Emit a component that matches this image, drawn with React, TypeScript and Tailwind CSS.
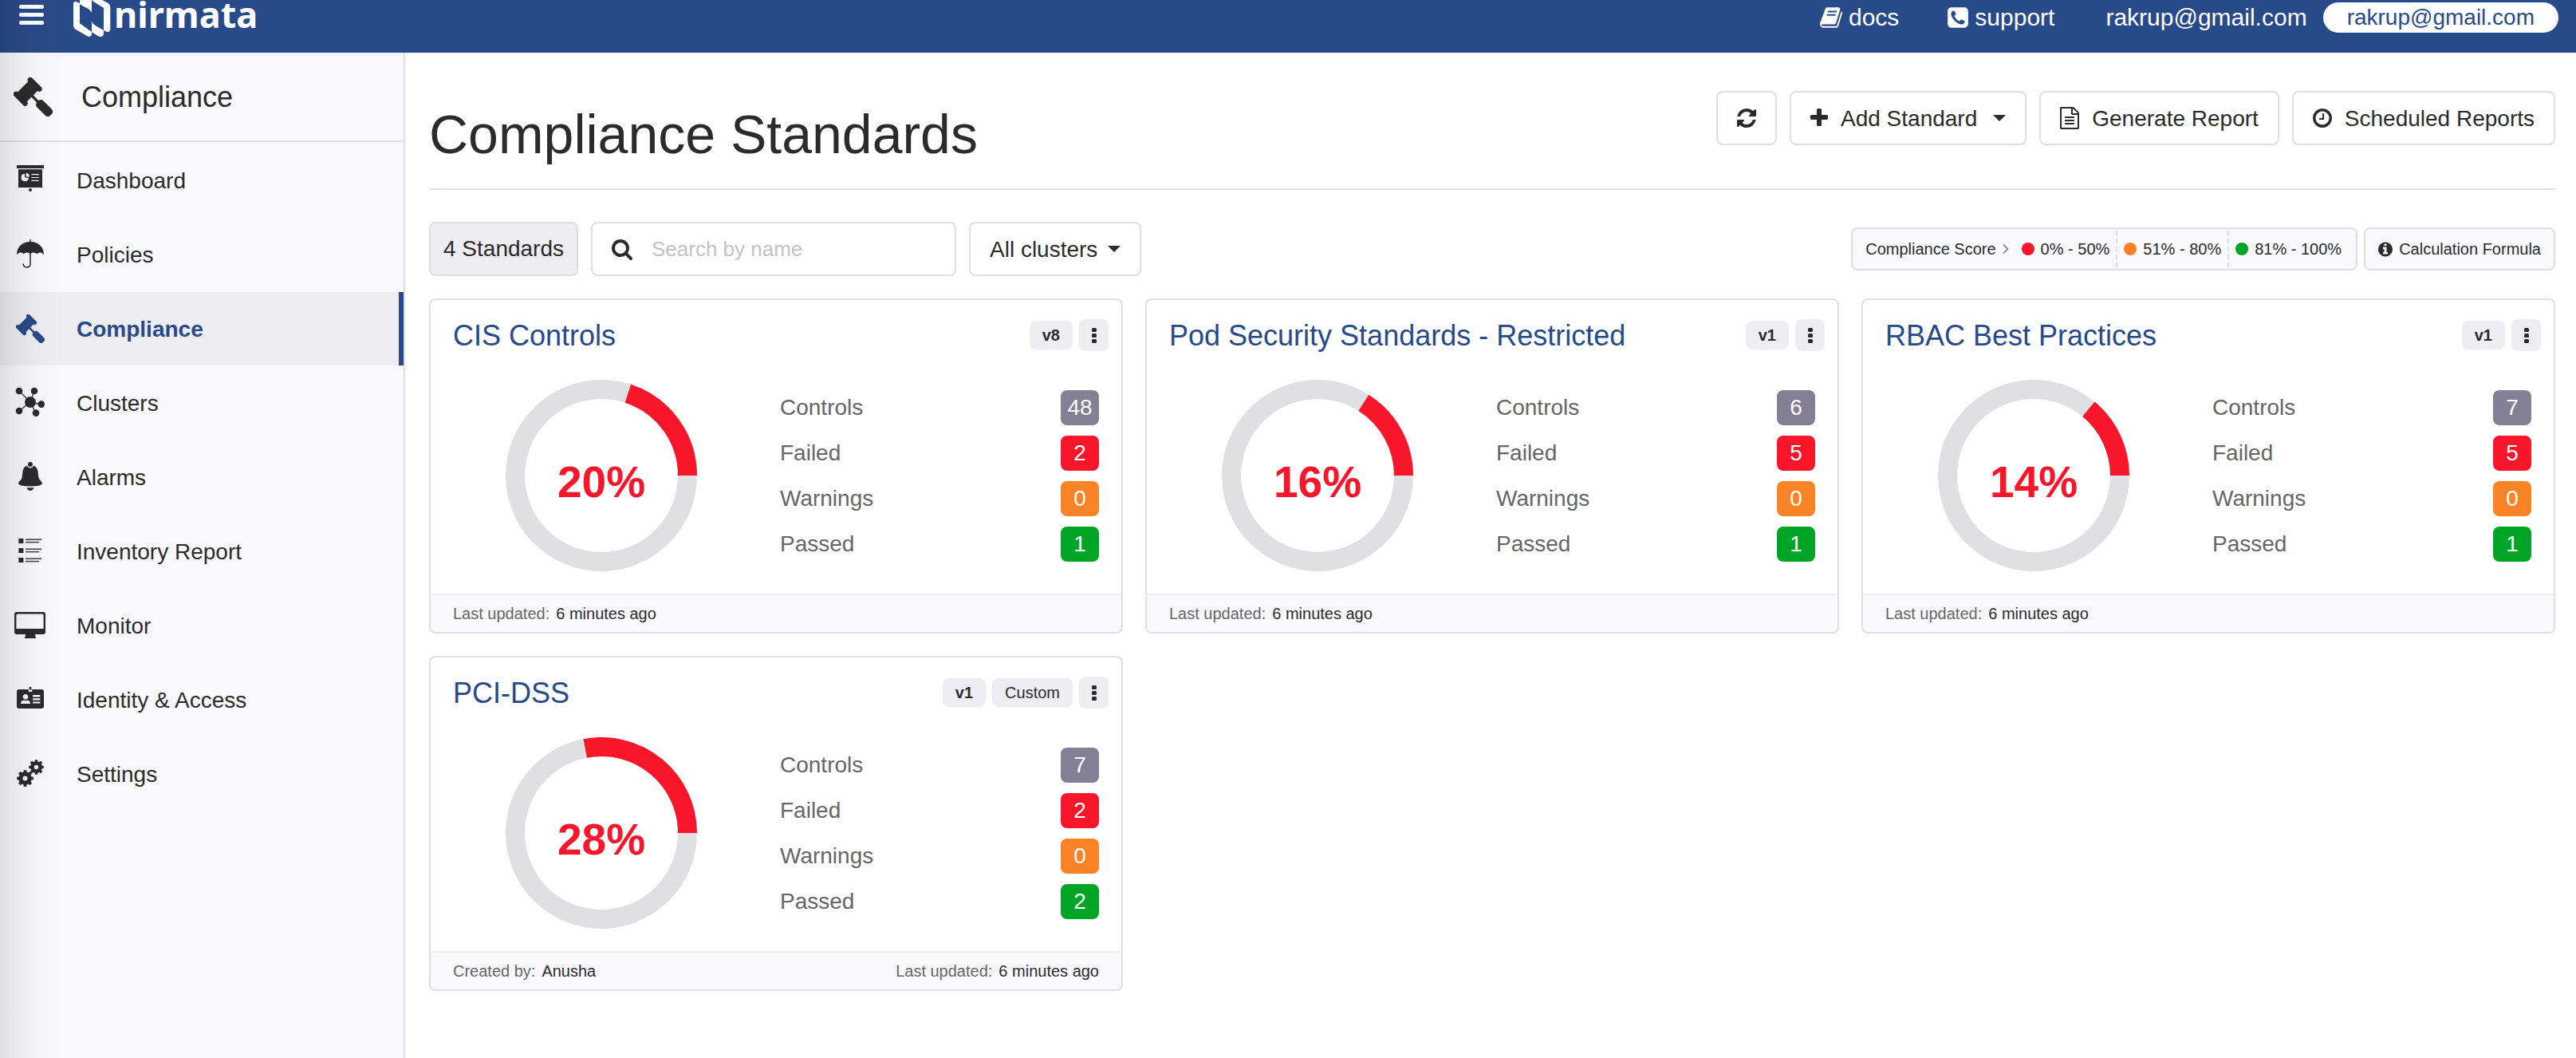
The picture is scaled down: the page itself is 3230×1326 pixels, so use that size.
import React from "react";

/* ---------- Icons ---------- */

type GlyphProps = { x: number; w: number; d: string; className: string };

function Glyph({ x, w, d, className }: GlyphProps) {
  return (
    <svg viewBox={`${x} 0 ${w} 1792`} className={className} fill="currentColor" aria-hidden="true">
      <path d={d} />
    </svg>
  );
}

const PATHS = {
  book: "M1703 478q40 57 18 129l-275 906q-19 64-76.5 107.5t-122.5 43.5h-923q-77 0-148.5-53.5t-99.5-131.5q-24-67-2-127 0-4 3-27t4-37q1-8-3-21.5t-3-19.5q2-11 8-21t16.5-23.5 16.5-23.5q23-38 45-91.5t30-91.5q3-10 .5-30t-.5-28q3-11 17-28t17-23q21-36 42-92t25-90q1-9-2.5-32t.5-28q4-13 22-30.5t22-22.5q19-26 42.5-84.5t27.5-96.5q1-8-3-25.5t-2-26.5q2-8 9-18t18-23 17-21q8-12 16.5-30.5t15-35 16-36 19.5-32 26.5-23.5 36-11.5 47.5 5.5l-1 3q38-9 51-9h761q74 0 114 56t18 130l-274 906q-36 119-71.5 153.5t-128.5 34.5h-869q-27 0-38 15-11 16-1 43 24 70 144 70h923q29 0 56-15.5t35-41.5l300-987q7-22 5-57 38 15 59 43zm-1064 2q-4 13 2 22.5t20 9.5h608q13 0 25.5-9.5t16.5-22.5l21-64q4-13-2-22.5t-20-9.5h-608q-13 0-25.5 9.5t-16.5 22.5zm-83 256q-4 13 2 22.5t20 9.5h608q13 0 25.5-9.5t16.5-22.5l21-64q4-13-2-22.5t-20-9.5h-608q-13 0-25.5 9.5t-16.5 22.5z",
  phone:
    "M1408 1193q0-11-2-16t-18-16.5-40.5-25-47.5-26.5-45.5-25-28.5-15q-5-3-19-13t-25-15-21-5q-15 0-36.5 20.5t-39.5 45-38.5 45-33.5 20.5q-7 0-16.5-3.5t-15.5-6.5-17-9.5-14-8.5q-99-55-170-126.5t-127-170.5q-2-3-8.5-14t-9.5-17-6.5-15.5-3.5-16.5q0-13 20.5-33.5t45-38.5 45-39.5 20.5-36.5q0-10-5-21t-15-25-13-19q-3-6-15-28.5t-25-45.5-26.5-47.5-25-40.5-16.5-18-16-2q-48 0-101 22-46 21-80 94.5t-34 130.5q0 16 2.5 34t5 30.5 9 33 10 29.5 12.500 33 11 30q60 164 216.5 320.5t320.5 216.5q6 2 30 11t33 12.5 29.5 10 33 9 30.5 5 34 2.5q57 0 130.5-34t94.5-80q22-53 22-101zm256-777v960q0 119-84.5 203.5t-203.5 84.5h-960q-119 0-203.5-84.5t-84.5-203.5v-960q0-119 84.5-203.5t203.5-84.5h960q119 0 203.5 84.5t84.5 203.5z",
  refresh:
    "M1639 1056q0 5-1 7-64 268-268 434.5t-478 166.5q-146 0-282.5-55t-243.5-157l-129 129q-19 19-45 19t-45-19-19-45v-448q0-26 19-45t45-19h448q26 0 45 19t19 45-19 45l-137 137q71 66 161 102t187 36q134 0 250-65t186-179q11-17 53-117 8-23 30-23h192q13 0 22.5 9.5t9.5 22.5zm25-800v448q0 26-19 45t-45 19h-448q-26 0-45-19t-19-45 19-45l138-138q-148-137-349-137-134 0-250 65t-186 179q-11 17-53 117-8 23-30 23h-199q-13 0-22.5-9.5t-9.5-22.5v-7q65-268 270-434.5t480-166.5q146 0 284 55.5t245 156.5l130-129q19-19 45-19t45 19 19 45z",
  plus: "M1600 736v192q0 40-28 68t-68 28h-416v416q0 40-28 68t-68 28h-192q-40 0-68-28t-28-68v-416h-416q-40 0-68-28t-28-68v-192q0-40 28-68t68-28h416v-416q0-40 28-68t68-28h192q40 0 68 28t28 68v416h416q40 0 68 28t28 68z",
  file: "M1596 380q28 28 48 76t20 88v1152q0 40-28 68t-68 28h-1344q-40 0-68-28t-28-68v-1600q0-40 28-68t68-28h896q40 0 88 20t76 48zm-444-244v376h376q-10-29-22-41l-313-313q-12-12-41-22zm384 1528v-1024h-416q-40 0-68-28t-28-68v-416h-768v1536h1280zm-1024-864q0-14 9-23t23-9h704q14 0 23 9t9 23v64q0 14-9 23t-23 9h-704q-14 0-23-9t-9-23v-64zm736 224q14 0 23 9t9 23v64q0 14-9 23t-23 9h-704q-14 0-23-9t-9-23v-64q0-14 9-23t23-9h704zm0 256q14 0 23 9t9 23v64q0 14-9 23t-23 9h-704q-14 0-23-9t-9-23v-64q0-14 9-23t23-9h704z",
  clock:
    "M1024 544v448q0 14-9 23t-23 9h-320q-14 0-23-9t-9-23v-64q0-14 9-23t23-9h224v-352q0-14 9-23t23-9h64q14 0 23 9t9 23zm416 352q0-148-73-273t-198-198-273-73-273 73-198 198-73 273 73 273 198 198 273 73 273-73 198-198 73-273zm224 0q0 209-103 385.5t-279.5 279.5-385.5 103-385.5-103-279.5-279.5-103-385.5 103-385.5 279.5-279.5 385.5-103 385.5 103 279.5 279.5 103 385.5z",
  info: "M1152 1376v-160q0-14-9-23t-23-9h-96v-512q0-14-9-23t-23-9h-320q-14 0-23 9t-9 23v160q0 14 9 23t23 9h96v320h-96q-14 0-23 9t-9 23v160q0 14 9 23t23 9h448q14 0 23-9t9-23zm-128-896v-160q0-14-9-23t-23-9h-192q-14 0-23 9t-9 23v160q0 14 9 23t23 9h192q14 0 23-9t9-23zm640 416q0 209-103 385.5t-279.5 279.5-385.5 103-385.5-103-279.5-279.5-103-385.5 103-385.5 279.5-279.5 385.5-103 385.5 103 279.5 279.5 103 385.5z",
  search:
    "M1216 832q0-185-131.5-316.5t-316.5-131.5-316.5 131.5-131.5 316.5 131.5 316.5 316.5 131.5 316.5-131.5 131.5-316.5zm512 832q0 52-38 90t-90 38q-54 0-90-38l-343-342q-179 124-399 124-143 0-273.5-55.5t-225-150-150-225-55.5-273.5 55.5-273.5 150-225 225-150 273.5-55.5 273.5 55.5 225 150 150 225 55.5 273.5q0 220-124 399l343 343q37 37 37 90z",
};

function Caret() {
  return (
    <svg viewBox="0 0 16 8" className="h-2 w-4" fill="currentColor" aria-hidden="true">
      <path d="M0 0H16L8 8Z" />
    </svg>
  );
}

function Gavel({ className }: { className: string }) {
  return (
    <svg viewBox="51 288 147 147" className={className} fill="currentColor" aria-hidden="true">
      <g transform="translate(104 341) rotate(45)">
        <rect x="-34" y="-48" width="68" height="20" rx="10" />
        <rect x="-25" y="-38" width="50" height="76" />
        <rect x="-34" y="28" width="68" height="20" rx="10" />
        <rect x="20" y="-5" width="46" height="10" />
        <path d="M52 0q2-16 14-17h44q14 0 14 12v10q0 12-14 12H66Q54 16 52 0Z" />
      </g>
    </svg>
  );
}

function NavSvg({ children }: { children: React.ReactNode }) {
  return (
    <svg viewBox="0 0 40 40" className="size-10" fill="currentColor" aria-hidden="true">
      {children}
    </svg>
  );
}

function Gear({ cx, cy, r }: { cx: number; cy: number; r: number }) {
  return (
    <g transform={`translate(${cx} ${cy})`}>
      <circle r={r * 0.54} fill="none" stroke="currentColor" strokeWidth={r * 0.5} />
      {[0, 45, 90, 135, 180, 225, 270, 315].map((a) => (
        <rect key={a} x={-r * 0.19} y={-r} width={r * 0.38} height={r * 0.4} rx={r * 0.06} transform={`rotate(${a})`} />
      ))}
    </g>
  );
}

const DashboardIcon = () => (
  <NavSvg>
    <rect x="3" y="1" width="34" height="4" rx="0.6" />
    <path fillRule="evenodd" d="M5 6.2H35V29H5ZM13 11.8A4.7 4.7 0 1 0 17.9 17L13.2 16.6ZM14.6 10.8V15.4H19A4.6 4.6 0 0 0 14.6 10.8ZM21.4 12V13.2H31V12ZM21.4 15.9V17.1H31V15.9ZM21.4 19.8V21H31V19.8Z" />
    <circle cx="20" cy="32" r="2" />
  </NavSvg>
);

const UmbrellaIcon = () => (
  <NavSvg>
    <rect x="19.3" y="1" width="1.4" height="5" />
    <path d="M3 20C3 10 10.6 4 20 4S37 10 37 20q-2.6-2.6-4.8-2.4Q29.4 17.6 28.2 19.6Q27 17.6 24 17.6Q21.4 17.6 20 19.4Q18.6 17.6 16 17.6Q13 17.6 11.8 19.6Q10.6 17.6 7.8 17.6Q5.6 17.4 3 20Z" />
    <path d="M20 18V32Q20 36 15.6 36Q11.2 36 11.2 31.6" fill="none" stroke="currentColor" strokeWidth="1.5" />
  </NavSvg>
);

const ClustersIcon = () => (
  <NavSvg>
    <path d="M20 19L6 5M20 19L25 5M20 19L34 22M20 19L27 33M20 19L6 30" stroke="currentColor" strokeWidth="1.3" />
    <circle cx="20" cy="19" r="7" />
    <circle cx="6" cy="5" r="4.3" />
    <circle cx="25" cy="5" r="4.3" />
    <circle cx="33.7" cy="21.6" r="4.3" />
    <circle cx="27" cy="32.6" r="4.3" />
    <circle cx="6" cy="30" r="4.3" />
  </NavSvg>
);

const BellIcon = () => (
  <NavSvg>
    <circle cx="20" cy="4" r="3" />
    <path d="M16 5.5Q17 8.4 20 8.4T24 5.5Q29.400 7.5 29.8 15Q30 22 32.5 24Q35 25.800 35 28Q34 31.5 20 31.5T5 28Q5 25.8 7.5 24Q10 22 10.2 15Q10.6 7.5 16 5.5Z" />
    <path d="M15.8 33.2H24.2Q23.4 37 20 37T15.8 33.2Z" />
  </NavSvg>
);

const InventoryIcon = () => (
  <NavSvg>
    {[4, 16, 28].map((y) => (
      <g key={y}>
        <rect x="5.4" y={y} width="6" height="6" />
        <rect x="14" y={y + 0.4} width="20" height="1.6" opacity="0.85" />
        <rect x="14" y={y + 3.8} width="17" height="1.6" opacity="0.85" />
      </g>
    ))}
  </NavSvg>
);

const MonitorIcon = () => (
  <NavSvg>
    <path fillRule="evenodd" d="M3 3H36Q39 3 39 6V28Q39 31 36 31H26Q26 34 27.5 36H12.5Q14 34 14 31H3Q0 31 0 28V6Q0 3 3 3ZM4 5.4Q2.4 5.4 2.4 7V24H36.6V7Q36.6 5.4 35 5.4Z" />
  </NavSvg>
);

const IdentityIcon = () => (
  <NavSvg>
    <path fillRule="evenodd" d="M6 7H17.8V10H22.2V7H34Q37 7 37 10V28Q37 31 34 31H6Q3 31 3 28V10Q3 7 6 7ZM14 13A3.4 3.4 0 1 0 14.01 13ZM8 25H20Q20 21 16 20.6L14 21.4L12 20.6Q8 21 8 25ZM23 14V16.4H32.4V14ZM23 18.2V20.4H32.4V18.2ZM23 22.4V24.6H32.4V22.4Z" />
    <rect x="18.6" y="4" width="2.8" height="3.4" />
  </NavSvg>
);

const SettingsIcon = () => (
  <NavSvg>
    <Gear cx={13.5} cy={25.5} r={10.3} />
    <Gear cx={27.5} cy={11.5} r={9.3} />
  </NavSvg>
);

/* ---------- Top bar ---------- */

function TopBar() {
  return (
    <header className="h-[66px] bg-[#294a88] text-white">
      <div className="flex h-11 items-center pr-[22px] pl-6 text-[30px]">
        <button type="button" aria-label="Toggle menu" className="mt-1.5 flex flex-col gap-[5px] self-start">
          <span className="h-[5px] w-[31px] rounded-xs bg-white" />
          <span className="h-[5px] w-[31px] rounded-xs bg-white" />
          <span className="h-[5px] w-[31px] rounded-xs bg-white" />
        </button>
        <a href="#home" className="ml-[37px] flex gap-1 self-start">
          <svg viewBox="276 0 141 141" className="size-[47px]" fill="currentColor" aria-hidden="true">
            <path d="M276 16Q276 5 287 6L300 13V88L345 120V130Q342 140 331 137L284 110Q276 105 276 97Z" />
            <path d="M300 0H345V47L336 36L300 16Z" />
            <path d="M347 0H385L408 13Q415 18 415 27V110Q413 122 402 120L390 114V30L347 3Z" />
            <path d="M345 80Q350 92 360 97L390 114V128Q387 140 374 138L345 121Z" />
          </svg>
          <span className="font-['Noto_Sans',sans-serif] text-[45px] leading-[36px] font-bold">nirmata</span>
        </a>
        <nav className="ml-auto flex items-center">
          <a href="#docs" className="mr-[61px] flex items-center gap-2">
            <Glyph x={63} w={1665} d={PATHS.book} className="h-[30px] w-7" />
            docs
          </a>
          <a href="#support" className="mr-16 flex items-center gap-2">
            <Glyph x={128} w={1536} d={PATHS.phone} className="h-[30px] w-[26px]" />
            support
          </a>
          <a href="#account" className="mr-5">
            rakrup@gmail.com
          </a>
          <button type="button" className="h-[38px] rounded-full bg-white px-[30px] text-[28px] leading-[38px] text-[#294a88]">
            rakrup@gmail.com
          </button>
        </nav>
      </div>
    </header>
  );
}

/* ---------- Sidebar ---------- */

const NAV = [
  { label: "Dashboard", icon: <DashboardIcon /> },
  { label: "Policies", icon: <UmbrellaIcon /> },
  { label: "Compliance", icon: <Gavel className="size-[36px]" />, active: true },
  { label: "Clusters", icon: <ClustersIcon /> },
  { label: "Alarms", icon: <BellIcon /> },
  { label: "Inventory Report", icon: <InventoryIcon /> },
  { label: "Monitor", icon: <MonitorIcon /> },
  { label: "Identity & Access", icon: <IdentityIcon /> },
  { label: "Settings", icon: <SettingsIcon /> },
];

function Sidebar() {
  return (
    <aside className="w-[508px] shrink-0 border-r-2 border-[#dedee4] bg-[#f9f9fd]">
      <div className="flex h-28 items-center gap-9 border-b-2 border-[#dedee4] pl-[17px] text-[36px]">
        <Gavel className="size-[49px]" />
        Compliance
      </div>
      <nav className="flex flex-col gap-px pt-0.5">
        {NAV.map((n) => (
          <a
            key={n.label}
            href={"#" + n.label.toLowerCase().replace(/\W+/g, "-")}
            aria-current={n.active ? "page" : undefined}
            className={
              n.active
                ? "flex h-[92px] items-center gap-9 border-r-6 border-[#294a88] bg-[#eeedf2] pl-4 font-bold text-[#294a88]"
                : "flex h-[92px] items-center gap-9 pl-4"
            }
          >
            <span className="flex w-11 justify-center">{n.icon}</span>
            {n.label}
          </a>
        ))}
      </nav>
    </aside>
  );
}

/* ---------- Toolbar ---------- */

function ActionButton({ children, label }: { children: React.ReactNode; label?: string }) {
  return (
    <button
      type="button"
      aria-label={label}
      className="flex h-[68px] items-center gap-4 rounded-lg border-2 border-[#dedee4] bg-white px-6"
    >
      {children}
    </button>
  );
}

function Legend() {
  const ranges = [
    { text: "0% - 50%", dot: "size-4 rounded-full bg-[#f8172a]" },
    { text: "51% - 80%", dot: "size-4 rounded-full bg-[#fb8327]" },
    { text: "81% - 100%", dot: "size-4 rounded-full bg-[#00a528]" },
  ];
  return (
    <div className="flex h-[54px] items-center rounded-lg border-2 border-[#dedee4] bg-[#f9f9fd] py-0.5 pr-2.5 pl-4 text-[20px]">
      Compliance Score
      <svg viewBox="0 0 8 12" className="mr-2 ml-2 h-3 w-2" fill="none" stroke="#777" strokeWidth="1.5" aria-hidden="true">
        <path d="M1 0.5L6.5 6L1 11.5" />
      </svg>
      {ranges.map((r) => (
        <span
          key={r.text}
          className="flex items-center gap-2 self-stretch border-r-2 border-dashed border-[#dedee4] px-2 last:border-r-0"
        >
          <span className={r.dot} />
          {r.text}
        </span>
      ))}
    </div>
  );
}

function Toolbar() {
  return (
    <div className="mt-10 flex items-center gap-4">
      <span className="flex h-[68px] items-center rounded-lg border-2 border-[#dedee4] bg-[#eeedf2] px-4 pb-0.5">4 Standards</span>
      <label className="flex h-[68px] w-[458px] items-center gap-6 rounded-lg border-2 border-[#dedee4] bg-white px-6">
        <Glyph x={64} w={1664} d={PATHS.search} className="h-7 w-[26px] shrink-0" />
        <input
          type="text"
          aria-label="Search by name"
          placeholder="Search by name"
          className="w-full min-w-0 text-[26px] outline-none placeholder:text-[#c3c3c7]"
        />
      </label>
      <div className="relative flex items-center">
        <select
          aria-label="Cluster"
          className="h-[68px] appearance-none rounded-lg border-2 border-[#dedee4] bg-white pr-[52px] pl-6"
        >
          <option>All clusters</option>
        </select>
        <span className="pointer-events-none absolute right-[26px]">
          <Caret />
        </span>
      </div>
      <div className="ml-auto flex gap-2">
        <Legend />
        <button
          type="button"
          className="flex h-[54px] items-center gap-2 rounded-lg border-2 border-[#dedee4] bg-[#f9f9fd] px-4 text-[20px]"
        >
          <Glyph x={128} w={1536} d={PATHS.info} className="h-[21px] w-[18px]" />
          Calculation Formula
        </button>
      </div>
    </div>
  );
}

/* ---------- Cards ---------- */

type Standard = {
  name: string;
  version: string;
  custom?: boolean;
  author?: string;
  score: number;
  counts: [number, number, number, number];
};

const STANDARDS: Standard[] = [
  { name: "CIS Controls", version: "v8", score: 20, counts: [48, 2, 0, 1] },
  { name: "Pod Security Standards - Restricted", version: "v1", score: 16, counts: [6, 5, 0, 1] },
  { name: "RBAC Best Practices", version: "v1", score: 14, counts: [7, 5, 0, 1] },
  { name: "PCI-DSS", version: "v1", custom: true, author: "Anusha", score: 28, counts: [7, 2, 0, 2] },
];

const ROWS = [
  { label: "Controls", tone: "bg-[#838096]" },
  { label: "Failed", tone: "bg-[#f8172a]" },
  { label: "Warnings", tone: "bg-[#fb8327]" },
  { label: "Passed", tone: "bg-[#00a528]" },
];

function Donut({ score }: { score: number }) {
  const angle = (score / 100) * 2 * Math.PI;
  const x = 120 + 108 * Math.cos(angle);
  const y = 120 - 108 * Math.sin(angle);
  return (
    <div className="relative size-60">
      <svg viewBox="0 0 240 240" className="size-full" fill="none" strokeWidth="24" aria-hidden="true">
        <circle cx="120" cy="120" r="108" stroke="#e0e0e2" />
        <path d={`M228 120A108 108 0 0 0 ${x} ${y}`} stroke="#f8172a" />
      </svg>
      <span className="absolute inset-0 flex items-center justify-center pt-4 text-[55px] font-bold text-[#f8172a]">
        {score}%
      </span>
    </div>
  );
}

function Card({ s }: { s: Standard }) {
  return (
    <article className="overflow-hidden rounded-lg border-2 border-[#dedee4] bg-white">
      <div className="mt-6 flex h-10 items-center gap-2 pr-4 pl-7 text-[20px]">
        <h2 className="mr-auto text-[36px] text-[#264a8a]">
          <a href="#standard">{s.name}</a>
        </h2>
        <span className="h-9 rounded-lg bg-[#eeedf2] px-4 leading-9 font-bold">{s.version}</span>
        {s.custom && <span className="h-9 rounded-lg bg-[#eeedf2] px-4 leading-9">Custom</span>}
        <button type="button" aria-label="More actions" className="flex h-10 w-[37px] items-center justify-center rounded-lg bg-[#eeedf2]">
          <svg viewBox="0 0 6 19" className="h-[19px] w-1.5" fill="currentColor" aria-hidden="true">
            <rect width="6" height="5" rx="1.5" />
            <rect y="7" width="6" height="5" rx="1.5" />
            <rect y="14" width="6" height="5" rx="1.5" />
          </svg>
        </button>
      </div>
      <div className="flex items-center pt-9 pb-7">
        <div className="flex w-[428px] justify-center">
          <Donut score={s.score} />
        </div>
        <dl className="flex flex-1 flex-col gap-[13px] pr-7 pl-2.5">
          {ROWS.map((r, i) => (
            <div key={r.label} className="flex h-11 items-center justify-between">
              <dt className="text-[#666666]">{r.label}</dt>
              <dd className={"h-11 w-12 rounded-lg text-center leading-[44px] text-white " + r.tone}>{s.counts[i]}</dd>
            </div>
          ))}
        </dl>
      </div>
      <footer className="flex h-12 items-center justify-between border-t-2 border-[#eeedf2] bg-[#f9f9fd] px-7 text-[20px]">
        {s.author && (
          <p className="flex gap-2">
            <span className="text-[#666666]">Created by:</span>
            {s.author}
          </p>
        )}
        <p className="flex gap-2">
          <span className="text-[#666666]">Last updated:</span>6 minutes ago
        </p>
      </footer>
    </article>
  );
}

/* ---------- Page ---------- */

export default function App() {
  return (
    <div className="relative flex min-h-screen flex-col bg-white font-['Liberation_Sans',Arial,sans-serif] text-[28px] leading-tight text-[#2b2b2b]">
      <TopBar />
      <div className="flex flex-1">
        <Sidebar />
        <main className="min-w-0 flex-1 pr-[26px] pb-10 pl-[30px]">
          <div className="flex items-start justify-between border-b-2 border-[#dedee4] pt-12 pb-[30px]">
            <h1 className="mt-4 text-[68px] leading-[76px]">Compliance Standards</h1>
            <div className="flex gap-4">
              <ActionButton label="Refresh">
                <Glyph x={128} w={1536} d={PATHS.refresh} className="h-7 w-6" />
              </ActionButton>
              <ActionButton>
                <Glyph x={192} w={1408} d={PATHS.plus} className="h-7 w-[22px]" />
                <span className="mr-1">Add Standard</span>
                <Caret />
              </ActionButton>
              <ActionButton>
                <Glyph x={128} w={1536} d={PATHS.file} className="h-7 w-6" />
                Generate Report
              </ActionButton>
              <ActionButton>
                <Glyph x={128} w={1536} d={PATHS.clock} className="h-7 w-6" />
                Scheduled Reports
              </ActionButton>
            </div>
          </div>
          <Toolbar />
          <section className="mt-7 grid grid-cols-3 gap-7">
            {STANDARDS.map((s) => (
              <Card key={s.name} s={s} />
            ))}
          </section>
        </main>
      </div>
      <div className="pointer-events-none absolute inset-y-0 left-0 w-20 bg-[linear-gradient(to_right,rgba(0,0,0,0.11),rgba(0,0,0,0.06)_25%,rgba(0,0,0,0.015)_60%,transparent)]" />
    </div>
  );
}
